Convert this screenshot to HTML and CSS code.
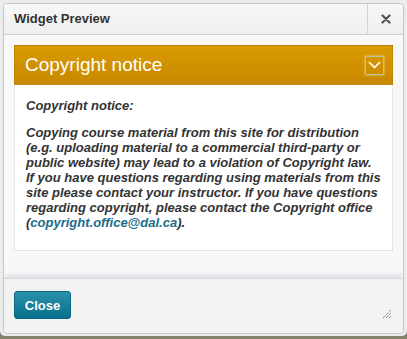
FILE: index.html
```html
<!DOCTYPE html>
<html lang="en">
<head>
    <meta charset="UTF-8">
    <title>Widget Preview</title>
    <link rel="stylesheet" href="styles.css">
</head>
<body>
    <div class="frame">
        <div class="dialog">
            <!-- Title bar -->
            <div class="dialog-title">
                <span class="title-text">Widget Preview</span>
                <button class="title-close" aria-label="Close">
                    <svg width="10" height="10" viewBox="0 0 10 10">
                        <path d="M1.5 1.5 L8.5 8.5 M8.5 1.5 L1.5 8.5" stroke="#555" stroke-width="2.2" stroke-linecap="round"/>
                    </svg>
                </button>
            </div>

            <!-- Widget content -->
            <div class="dialog-content">
                <div class="widget">
                    <div class="widget-head">
                        <h3>Copyright notice</h3>
                        <span class="widget-toggle">
                            <svg width="13" height="8" viewBox="0 0 13 8">
                                <path d="M1 1 L6.5 6.5 L12 1" fill="none" stroke="#fff" stroke-width="1.6"/>
                            </svg>
                        </span>
                    </div>
                    <div class="widget-body">
                        <p>Copyright notice:</p>
                        <p>Copying course material from this site for distribution (e.g. uploading material to a commercial third-party or public website) may lead to a violation of Copyright law. If you have questions regarding using materials from this site please contact your instructor. If you have questions regarding copyright, please contact the Copyright office (<a href="#">copyright.office@dal.ca</a>).</p>
                    </div>
                </div>
            </div>

            <!-- Footer -->
            <div class="dialog-footer">
                <button class="btn-close">Close</button>
                <svg class="grip" width="10" height="10" viewBox="0 0 10 10">
                    <path d="M1 9 L9 1 M4 9 L9 4 M7 9 L9 7" stroke="#555" stroke-width="1" stroke-dasharray="1 1"/>
                </svg>
            </div>
        </div>
    </div>
</body>
</html>
```

FILE: styles.css
```css
/* Page */
body {
    margin: 0;
    background-color: #85836a;
    font-family: "Liberation Sans", Arial, sans-serif;
    color: #333;
}

.frame {
    height: 336px;
    box-sizing: border-box;
    padding: 3px 3px 2px 3px;
    background-color: #ececec;
    border-radius: 0 0 5px 5px;
}

/* Dialog */
.dialog {
    height: 100%;
    box-sizing: border-box;
    display: flex;
    flex-direction: column;
    border: 1px solid #c6c6c6;
    border-radius: 4px;
    background-color: #f8f8f8;
    overflow: hidden;
}

.dialog-title {
    display: flex;
    align-items: stretch;
    height: 30px;
    background: linear-gradient(#f7f7f7, #efefef);
    border-bottom: 1px solid #cdcdcd;
}

.title-text {
    flex: 1;
    padding-left: 10px;
    font-size: 13px;
    font-weight: bold;
    line-height: 30px;
    color: #333;
}

.title-close {
    width: 36px;
    border: none;
    border-left: 1px solid #d4d4d4;
    background: transparent;
    padding: 0;
    display: flex;
    align-items: center;
    justify-content: center;
}

.dialog-content {
    flex: 1;
    padding: 10px 10px 0 10px;
}

/* Widget box */
.widget {
    border: 1px dotted #d0d0c8;
    background-color: #fff;
}

.widget-head {
    display: flex;
    align-items: center;
    justify-content: space-between;
    height: 38px;
    margin: -1px -1px 0 -1px;
    padding: 0 8px 0 10px;
    background: linear-gradient(#d99b00, #c88800);
    border: 1px dotted #b27a00;
}

.widget-head h3 {
    margin: 0;
    font-size: 19px;
    font-weight: normal;
    color: #fff;
}

.widget-toggle {
    width: 17px;
    height: 17px;
    border: 1px solid #b9c3a0;
    box-shadow: 0 0 2px #e6dca0;
    display: flex;
    align-items: center;
    justify-content: center;
}

.widget-body {
    padding: 13px 10px 8px 11px;
}

.widget-body p {
    margin: 0 0 12px 0;
    font-size: 13px;
    line-height: 15px;
    font-weight: bold;
    font-style: italic;
    color: #333;
}

.widget-body a {
    color: #1b6d8a;
    text-decoration: none;
}

/* Footer */
.dialog-footer {
    position: relative;
    height: 55px;
    box-sizing: border-box;
    padding: 12px 10px 0 10px;
    background-color: #f2f2f2;
    border-top: 1px solid #d6d6de;
    box-shadow: 0 -3px 4px rgba(180, 180, 200, 0.35);
}

.btn-close {
    width: 57px;
    height: 28px;
    border: 1px solid #0b6a82;
    border-radius: 3px;
    background: linear-gradient(#2a91ab, #06708c);
    color: #fff;
    font-family: "Liberation Sans", Arial, sans-serif;
    font-size: 13px;
    font-weight: bold;
}

.grip {
    position: absolute;
    right: 11px;
    bottom: 14px;
}
```
